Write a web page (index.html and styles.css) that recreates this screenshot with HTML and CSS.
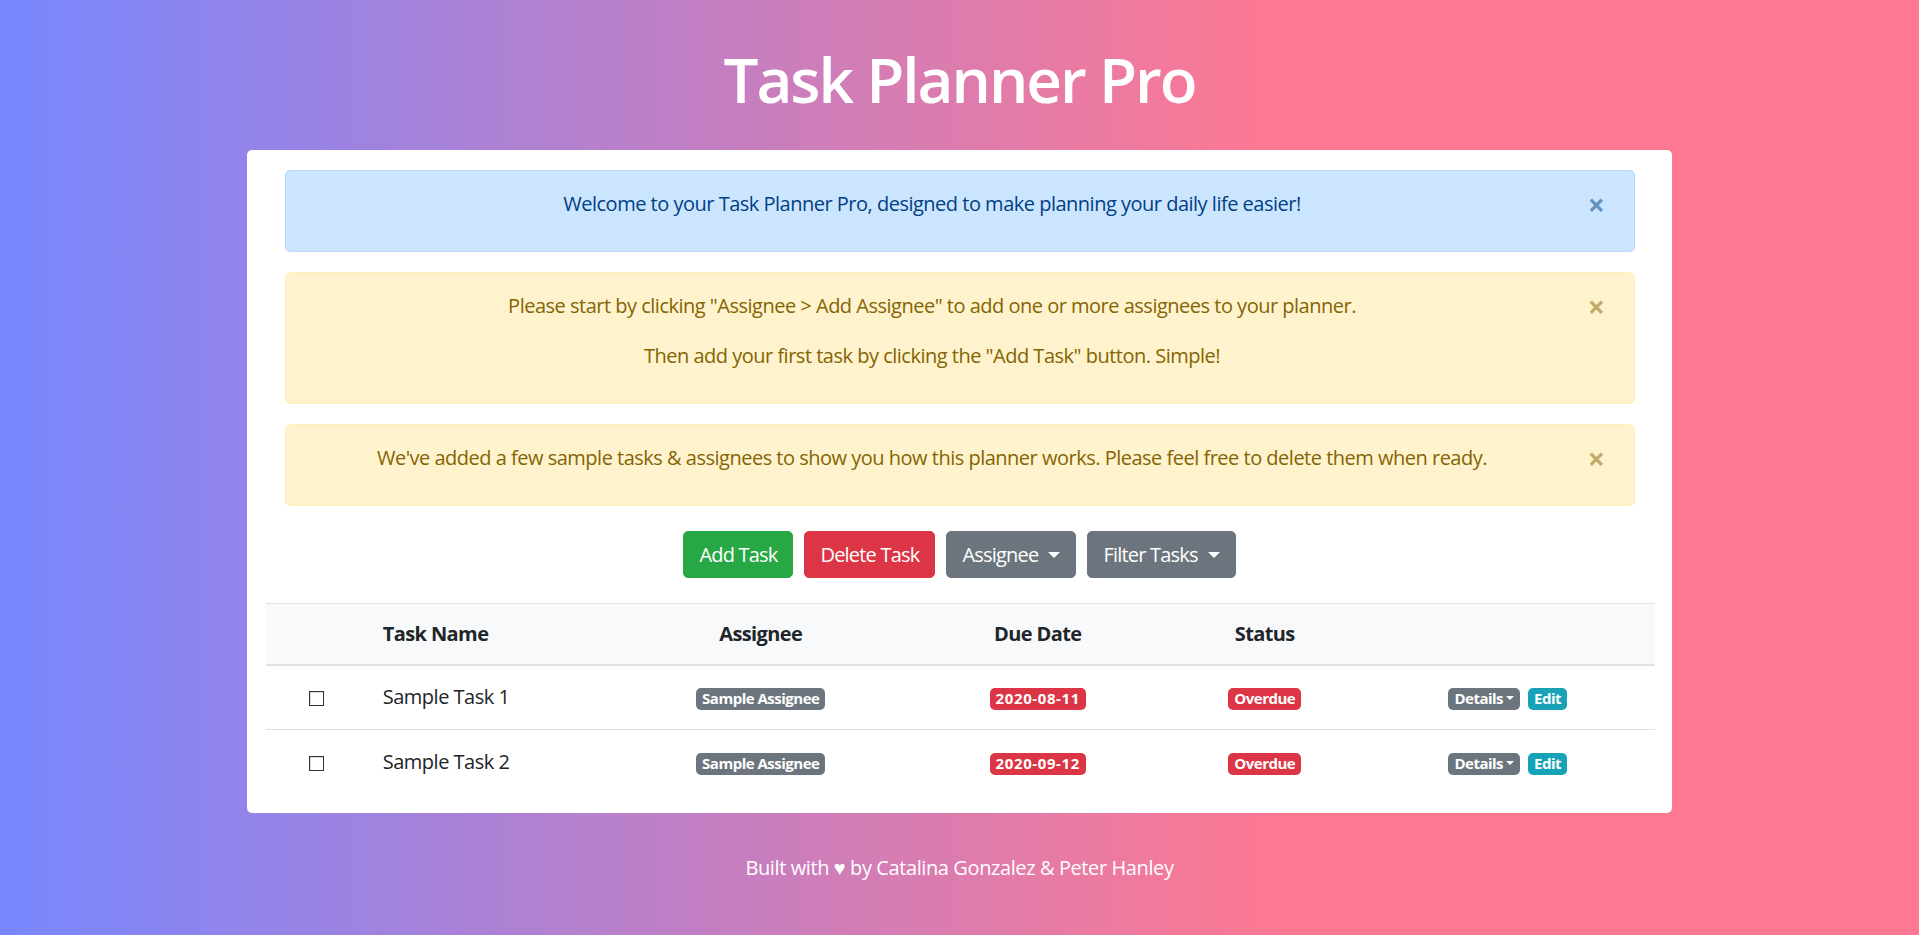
FILE: index.html
```html
<!DOCTYPE html>
<html lang="en">
<head>
<meta charset="utf-8">
<title>Task Planner Pro</title>
<link rel="stylesheet" href="styles.css">
</head>
<body>
<header class="header">
  <h1 class="title">Task Planner Pro</h1>
</header>
<main class="card">
  <div class="alerts">
    <div class="alert alert-primary">
      <p>Welcome to your Task Planner Pro, designed to make planning your daily life easier!</p>
      <span class="close">&times;</span>
    </div>
    <div class="alert alert-warning">
      <p>Please start by clicking "Assignee &gt; Add Assignee" to add one or more assignees to your planner.</p>
      <p>Then add your first task by clicking the "Add Task" button. Simple!</p>
      <span class="close">&times;</span>
    </div>
    <div class="alert alert-warning">
      <p>We've added a few sample tasks &amp; assignees to show you how this planner works. Please feel free to delete them when ready.</p>
      <span class="close">&times;</span>
    </div>
  </div>
  <div class="toolbar">
    <button class="btn btn-success">Add Task</button>
    <button class="btn btn-danger">Delete Task</button>
    <button class="btn btn-secondary">Assignee <span class="caret"></span></button>
    <button class="btn btn-secondary">Filter Tasks <span class="caret"></span></button>
  </div>
  <table class="tasks">
    <colgroup>
      <col class="c-check"><col class="c-name"><col class="c-assignee"><col class="c-due"><col class="c-status"><col class="c-actions">
    </colgroup>
    <thead>
      <tr>
        <th></th>
        <th class="left">Task Name</th>
        <th>Assignee</th>
        <th>Due Date</th>
        <th>Status</th>
        <th></th>
      </tr>
    </thead>
    <tbody>
      <tr>
        <td><span class="checkbox"></span></td>
        <td class="left">Sample Task 1</td>
        <td><span class="badge badge-secondary">Sample Assignee</span></td>
        <td><span class="badge badge-danger badge-date">2020-08-11</span></td>
        <td><span class="badge badge-danger">Overdue</span></td>
        <td><span class="actions"><span class="badge badge-secondary">Details<span class="caret small"></span></span><span class="badge badge-info">Edit</span></span></td>
      </tr>
      <tr>
        <td><span class="checkbox"></span></td>
        <td class="left">Sample Task 2</td>
        <td><span class="badge badge-secondary">Sample Assignee</span></td>
        <td><span class="badge badge-danger badge-date">2020-09-12</span></td>
        <td><span class="badge badge-danger">Overdue</span></td>
        <td><span class="actions"><span class="badge badge-secondary">Details<span class="caret small"></span></span><span class="badge badge-info">Edit</span></span></td>
      </tr>
    </tbody>
  </table>
</main>
<footer class="footer">Built with &#9829; by Catalina Gonzalez &amp; Peter Hanley</footer>
</body>
</html>
```

FILE: styles.css
```css
* { box-sizing: border-box; }

html, body { height: 100%; }

body {
  margin: 0;
  min-height: 100vh;
  font-family: "Open Sans", "Noto Sans", sans-serif;
  font-size: 20px;
  line-height: 30px;
  color: #212529;
  background: linear-gradient(to right, #7887ff 0%, #ff7891 67%, #ff7891 100%);
}

.header {
  padding-top: 37px;
  padding-bottom: 29px;
}

.title {
  margin: 0;
  text-align: center;
  color: #fff;
  font-size: 62px;
  font-weight: 600;
  line-height: 84px;
  letter-spacing: -2px;
}

.card {
  display: block;
  width: 1425px;
  margin: 0 auto;
  background: #fff;
  border-radius: 5px;
  padding: 20px 18.75px 18px;
}

.alerts {
  padding: 0 18.75px;
}

.alert {
  position: relative;
  border: 1px solid transparent;
  border-radius: 5px;
  padding: 18px 80px 12px 25px;
  margin-bottom: 20px;
  text-align: center;
  letter-spacing: -0.5px;
}

.alert p {
  margin: 0 0 20px;
}

.alert-primary {
  background: #cce5ff;
  border-color: #b8daff;
  color: #004085;
}

.alert-warning {
  background: #fff3cd;
  border-color: #ffeeba;
  color: #856404;
}

.close {
  position: absolute;
  top: 0;
  right: 0;
  padding: 19px 29px 15px 25px;
  font-size: 30px;
  font-weight: 700;
  line-height: 30px;
  color: inherit;
  opacity: .5;
}

.toolbar {
  display: flex;
  justify-content: center;
  gap: 11px;
  margin-top: 25px;
  margin-bottom: 25px;
}

.btn {
  font-family: inherit;
  font-size: 20px;
  line-height: 30px;
  padding: 7.5px 15px;
  border: 1px solid transparent;
  border-radius: 5px;
  color: #fff;
  letter-spacing: -0.8px;
  display: inline-flex;
  align-items: center;
}

.btn-success { background: #28a745; border-color: #28a745; }
.btn-danger { background: #dc3545; border-color: #dc3545; }
.btn-secondary { background: #6c757d; border-color: #6c757d; }

.caret {
  display: inline-block;
  margin-left: 10px;
  width: 0;
  height: 0;
  border-top: 6px solid #fff;
  border-left: 6px solid transparent;
  border-right: 6px solid transparent;
}

.caret.small {
  margin-left: 3px;
  border-top-width: 4px;
  border-left-width: 4px;
  border-right-width: 4px;
  vertical-align: middle;
  position: relative;
  top: -2px;
}

.tasks {
  width: 100%;
  border-collapse: collapse;
  table-layout: fixed;
}

.c-check { width: 102px; }
.c-name { width: 247px; }
.c-assignee { width: 292px; }
.c-due { width: 262px; }
.c-status { width: 192px; }
.c-actions { width: 294px; }

.tasks th,
.tasks td {
  text-align: center;
  padding: 0 15px;
  vertical-align: middle;
}

.tasks .left { text-align: left; }

.tasks thead th {
  background: #f8f9fa;
  border-top: 1px solid #dee2e6;
  border-bottom: 2px solid #dee2e6;
  font-weight: 700;
  letter-spacing: -0.6px;
  height: 61px;
}

.tasks tbody td {
  border-top: 1px solid #dee2e6;
  height: 65px;
  letter-spacing: -0.5px;
}

.tasks tbody tr:first-child td { border-top: none; }

.checkbox {
  display: inline-block;
  width: 15px;
  height: 15px;
  border: 1px solid #333;
  background: #fff;
  vertical-align: middle;
  box-shadow: inset 1px 1px 0 #ddd;
}

.badge {
  display: inline-block;
  font-size: 15px;
  font-weight: 700;
  line-height: 15px;
  padding: 3.75px 6px;
  border-radius: 5px;
  color: #fff;
  vertical-align: middle;
  letter-spacing: -0.5px;
  white-space: nowrap;
}

.badge-date { letter-spacing: 0.6px; }

.badge-secondary { background: #6c757d; }
.badge-danger { background: #dc3545; }
.badge-info { background: #17a2b8; }

.actions {
  display: inline-flex;
  gap: 8px;
  align-items: center;
}

.footer {
  text-align: center;
  color: #fff;
  padding-top: 40px;
  letter-spacing: -0.4px;
}
```
